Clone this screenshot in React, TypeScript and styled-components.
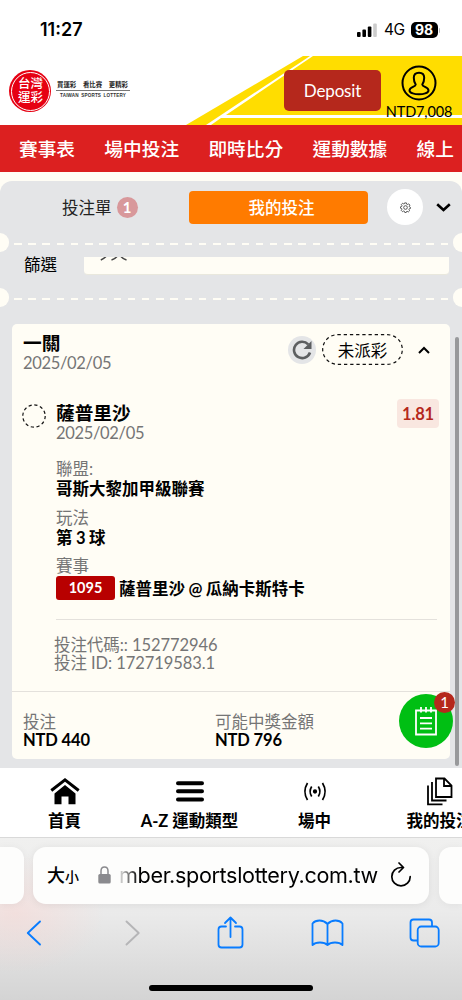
import React from "react";
import styled, { createGlobalStyle } from "styled-components";

const GlobalStyle = createGlobalStyle`
  * { box-sizing: border-box; }
  body { margin: 0; background: #fff; }
`;

const CREAM = "#fffdf5";
const PANEL = "#e4e5e7";

const Screen = styled.div`
  width: 462px;
  height: 1000px;
  overflow: hidden;
  display: flex;
  flex-direction: column;
  background: #fff;
  color: #000;
  font-family: Lato, "Noto Sans CJK TC", sans-serif;
  font-size: 16.5px;
`;

/* ---------- status bar ---------- */
const StatusBar = styled.div`
  height: 56px;
  flex: none;
  display: flex;
  align-items: center;
  justify-content: space-between;
  padding: 4px 22px 0 40px;
  font-family: Inter, sans-serif;
`;
const Clock = styled.span`
  font-size: 18px;
  font-weight: 600;
  margin-top: -1px;
`;
const StatusRight = styled.div`
  display: flex;
  align-items: center;
`;
const Network = styled.span`
  margin: 0 6px 0 7px;
  font-size: 15.5px;
  line-height: 16px;
  letter-spacing: -0.6px;
`;
const Battery = styled.span`
  width: 27px;
  height: 16px;
  border-radius: 5px;
  background: #000;
  color: #fff;
  font-size: 14px;
  font-weight: 700;
  line-height: 16px;
  text-align: center;
`;
const BatteryTip = styled.span`
  width: 1.5px;
  height: 5px;
  margin-left: 1px;
  border-radius: 0 2px 2px 0;
  background: #bbb;
`;

/* ---------- site header ---------- */
const Header = styled.header`
  position: relative;
  height: 69px;
  flex: none;
  display: flex;
  padding-left: 9px;
`;
const HeaderArt = styled.svg`
  position: absolute;
  right: 0;
  top: 0;
`;
const Seal = styled.div`
  width: 42px;
  height: 42px;
  margin-top: 14px;
  border-radius: 50%;
  background: #e60012;
  padding: 1.5px;
`;
const SealRing = styled.div`
  width: 39px;
  height: 39px;
  border: 0.8px solid #fff;
  border-radius: 50%;
  display: flex;
  flex-direction: column;
  align-items: center;
  justify-content: center;
  padding-left: 1px;
  color: #fff;
  font-size: 12.5px;
  font-weight: 500;
  line-height: 14px;
  white-space: nowrap;
`;
const Tagline = styled.div`
  width: 74px;
  margin: 25px 0 0 5px;
  text-align: center;
  white-space: nowrap;
`;
const TaglineZh = styled.div`
  display: flex;
  justify-content: space-between;
  padding: 0 2px 0 1px;
  height: 10px;
  border-bottom: 1px solid #777;
  font-size: 6.4px;
  line-height: 8px;
  font-weight: 700;
  color: #222;
`;
const TaglineEn = styled.div`
  margin-top: 2px;
  font-family: "Liberation Sans", sans-serif;
  font-weight: 700;
  font-size: 4.6px;
  line-height: 6px;
  word-spacing: 1px;
  letter-spacing: 0.16px;
  color: #333;
`;
const Deposit = styled.button`
  position: relative;
  width: 97px;
  height: 41px;
  margin: 14px 0 0 154px;
  border: 0;
  border-radius: 5px;
  background: #b5281c;
  color: #fff;
  font: 17px Lato, sans-serif;
  letter-spacing: -0.15px;
`;
const Account = styled.div`
  position: relative;
  width: 76px;
  padding-top: 9px;
  display: flex;
  flex-direction: column;
  align-items: center;
  font-size: 14.5px;
  letter-spacing: -0.15px;
  line-height: 18px;
`;
const Balance = styled.span`
  margin-top: 2px;
`;

const TopNav = styled.nav`
  height: 47px;
  flex: none;
  display: flex;
  gap: 29.3px;
  padding: 1px 0 0 19px;
  background: #dc2020;
  color: #fff;
  font-size: 18.7px;
  font-weight: 500;
  line-height: 46px;
  white-space: nowrap;
`;

/* ---------- bet panel ---------- */
const Stage = styled.main`
  position: relative;
  height: 596px;
  flex: none;
  padding-top: 9px;
  background: ${CREAM};
`;
const Panel = styled.section`
  height: 587px;
  border-radius: 12px 12px 0 0;
  background: ${PANEL};
  overflow: hidden;
`;
const Tabs = styled.div`
  height: 52px;
  display: flex;
  align-items: center;
`;
const SlipTab = styled.div`
  width: 189px;
  padding-left: 62px;
  display: flex;
  align-items: center;
  gap: 5px;
  color: #222;
`;
const SlipCount = styled.span`
  width: 21px;
  height: 21px;
  border-radius: 50%;
  background: #d8989b;
  color: #fff;
  font-size: 15px;
  font-weight: 700;
  line-height: 21px;
  text-align: center;
`;
const ActiveTab = styled.div`
  width: 179px;
  height: 33px;
  padding-left: 6px;
  border-radius: 4px;
  background: #ff7b00;
  color: #fff;
  font-weight: 500;
  line-height: 34px;
  text-align: center;
`;
const Settings = styled.div`
  width: 36px;
  height: 36px;
  margin: 0 13px 0 19px;
  border-radius: 50%;
  background: #fff;
  display: flex;
  align-items: center;
  justify-content: center;
`;
const Perforation = styled.div`
  height: 19px;
  display: flex;
  align-items: center;
  justify-content: space-between;
`;
const Notch = styled.span<{ $side: "left" | "right" }>`
  width: 9px;
  height: 19px;
  background: ${CREAM};
  border-radius: ${(p) => (p.$side === "left" ? "0 10px 10px 0" : "10px 0 0 10px")};
`;
const Dashes = styled.span`
  width: 435px;
  height: 2px;
  margin: 2px 4px 0 5px;
  flex: 1;
  background: repeating-linear-gradient(90deg, ${CREAM} 0 7.5px, transparent 7.5px 14.22px);
`;
const FilterRow = styled.div`
  height: 36px;
  display: flex;
  padding: 5px 13px 0 24px;
`;
const FilterLabel = styled.span`
  width: 60px;
  line-height: 16px;
  height: 18px;
`;
const FilterField = styled.div`
  flex: 1;
  height: 18px;
  border-radius: 0 0 4px 4px;
  background: ${CREAM};
  border-bottom: 1px solid #e9e8dd;
`;
const FieldRemnant = styled.svg`
  display: block;
`;

const Card = styled.article`
  height: 435px;
  margin: 17px 12px 0;
  border-radius: 5px;
  background: ${CREAM};
`;
const CardHead = styled.div`
  height: 74px;
  padding: 9px 12px 0 11px;
  display: flex;
`;
const Names = styled.div`
  flex: 1;
`;
const Title = styled.div`
  font-size: 18.7px;
  font-weight: 700;
  line-height: 20px;
`;
const DateText = styled.div`
  color: #757575;
  letter-spacing: -0.33px;
  line-height: 20px;
`;
const Refresh = styled.span`
  width: 28px;
  height: 28px;
  margin-right: 6px;
  border-radius: 50%;
  background: ${PANEL};
  display: flex;
  align-items: center;
  justify-content: center;
`;
const StatusTag = styled.span`
  position: relative;
  width: 81px;
  height: 31px;
  line-height: 34px;
  text-align: center;
`;
const Outline = styled.svg`
  position: absolute;
  inset: 0;
`;
const HeadActions = styled.div`
  display: flex;
  align-items: center;
  height: 33px;
`;
const Collapse = styled.svg`
  margin: 0 8px 0 15px;
`;
const Pick = styled.div`
  display: flex;
  padding: 5px 11px 0 10px;
  height: 61px;
`;
const PickMark = styled.svg`
  width: 24px;
  height: 24px;
  margin: 1px 10px 0 0;
`;
const Odds = styled.span`
  width: 42px;
  height: 29px;
  margin-top: -4px;
  border-radius: 4px;
  background: #f9e7e0;
  color: #b5281c;
  font-weight: 700;
  letter-spacing: -0.2px;
  line-height: 30px;
  text-align: center;
`;
const Details = styled.div`
  margin: 0 13px 0 44px;
  height: 161px;
  border-bottom: 1px solid #e4e1dc;
`;
const Label = styled.div`
  color: #757575;
  line-height: 20px;
`;
const Value = styled.div`
  display: flex;
  align-items: center;
  font-weight: 700;
  line-height: 20px;
  margin-bottom: 8.5px;
  word-spacing: -0.6px;
`;
const EventName = styled.span`
  padding-top: 2px;
`;
const Strong = styled.div`
  font-weight: 700;
  letter-spacing: -0.15px;
  line-height: 18px;
`;
const EventNo = styled.span`
  width: 59px;
  height: 24px;
  margin-right: 4px;
  border-radius: 3px;
  background: #b80000;
  color: #fff;
  font-size: 14.5px;
  line-height: 24px;
  text-align: center;
`;
const Codes = styled.div`
  height: 72px;
  padding: 16px 0 0 42px;
  color: #757575;
  letter-spacing: -0.07px;
  line-height: 18px;
  border-bottom: 1px solid #e4e1dc;
`;
const Totals = styled.div`
  display: grid;
  grid-template-columns: 192px 1fr;
  padding: 21px 0 0 11px;
`;
const TotalLabel = styled.div`
  color: #757575;
  line-height: 18px;
`;
const Scrollbar = styled.span`
  position: absolute;
  left: 455px;
  top: 165px;
  width: 4px;
  height: 429px;
  border-radius: 2px;
  background: #98999b;
`;
const Fab = styled.button`
  position: absolute;
  left: 399px;
  top: 522px;
  width: 54px;
  height: 54px;
  padding: 0;
  border: 0;
  border-radius: 50%;
  background: #00bf13;
  display: flex;
  align-items: center;
  justify-content: center;
`;
const FabCount = styled.span`
  position: absolute;
  right: -2px;
  top: -2px;
  width: 21px;
  height: 21px;
  border-radius: 50%;
  background: #b5281c;
  color: #fff;
  font: 15px/21px Lato, sans-serif;
  text-align: center;
`;

/* ---------- site bottom navigation ---------- */
const BottomNav = styled.nav`
  height: 70px;
  flex: none;
  display: flex;
  padding-left: 2px;
  border-bottom: 1px solid #d9d9d9;
  background: #fff;
  overflow: hidden;
`;
const NavItem = styled.div`
  width: 125px;
  flex: none;
  padding-top: 8px;
  display: flex;
  flex-direction: column;
  align-items: center;
  font-weight: 700;
  line-height: 22px;
  white-space: nowrap;
`;
const NavIcon = styled.svg`
  width: 30px;
  height: 30px;
  margin-bottom: 4px;
`;

/* ---------- browser chrome ---------- */
const Browser = styled.footer`
  height: 162px;
  flex: none;
  padding-top: 9px;
  background:
    radial-gradient(ellipse 90px 60px at 15px 75px, rgba(255, 205, 200, 0.38), transparent),
    linear-gradient(#f0f0ef 0, #ebebeb 45%, #d4d4d4 100%);
`;
const AddressRow = styled.div`
  display: flex;
  gap: 9.5px;
  height: 57px;
`;
const SideTab = styled.span<{ $side: "left" | "right" }>`
  flex: 1;
  background: #fdfdfc;
  border-radius: ${(p) => (p.$side === "left" ? "0 12px 12px 0" : "12px 0 0 12px")};
  box-shadow: 0 1px 8px rgba(0, 0, 0, 0.05);
`;
const Address = styled.div`
  width: 396px;
  border-radius: 13px;
  background: #fdfdfc;
  box-shadow: 0 1px 8px rgba(0, 0, 0, 0.07);
  display: flex;
  align-items: center;
  justify-content: space-between;
  padding: 0 17px 2px 14px;
`;
const AddressLead = styled.div`
  display: flex;
  align-items: center;
`;
const TextSize = styled.span`
  width: 51px;
  font-family: "Noto Sans CJK TC", sans-serif;
  font-weight: 500;
  font-size: 18px;
  line-height: 24px;
`;
const SmallGlyph = styled.span`
  font-size: 14px;
`;
const Url = styled.span`
  margin-left: 8px;
  font-family: Inter, sans-serif;
  font-size: 21.6px;
  line-height: 30px;
  letter-spacing: -0.35px;
  white-space: nowrap;
  background: linear-gradient(90deg, rgba(0, 0, 0, 0.1), #000 20px);
  background-clip: text;
  color: transparent;
`;
const Toolbar = styled.div`
  height: 58px;
  display: flex;
  align-items: center;
  justify-content: space-between;
  padding: 0 20px 0 17px;
`;
const ToolIcon = styled.svg`
  width: 34px;
  height: 34px;
`;
const HomeIndicator = styled.div`
  width: 164px;
  height: 6px;
  margin: 23px auto 0;
  border-radius: 3px;
  background: #000;
`;

const BLUE = "#087cff";

function PerforatedLine() {
  return (
    <Perforation>
      <Notch $side="left" />
      <Dashes />
      <Notch $side="right" />
    </Perforation>
  );
}

export default function App() {
  return (
    <Screen>
      <GlobalStyle />
      <StatusBar>
        <Clock>11:27</Clock>
        <StatusRight>
          <svg width="20" height="14" viewBox="0 0 20 14">
            <rect x="0" y="9" width="3.6" height="5" rx="1" />
            <rect x="5.4" y="6.5" width="3.6" height="7.5" rx="1" />
            <rect x="10.8" y="3.5" width="3.6" height="10.5" rx="1" />
            <rect x="16.2" y="0.5" width="3.6" height="13.5" rx="1" fill="#ccc" />
          </svg>
          <Network>4G</Network>
          <Battery>98</Battery>
          <BatteryTip />
        </StatusRight>
      </StatusBar>

      <Header>
        <HeaderArt width="276" height="69" viewBox="186 56 276 69">
          <path d="M303 56H310L206 125H186Z" fill="#ffdd00" />
          <path d="M313 56H462V115H226Z" fill="#ffdd00" />
          <path d="M221 118H462V125H211Z" fill="#ffdd00" />
        </HeaderArt>
        <Seal>
          <SealRing>
            <span>台灣</span>
            <span>運彩</span>
          </SealRing>
        </Seal>
        <Tagline>
          <TaglineZh>
            <span>買運彩</span>
            <span>看比賽</span>
            <span>更精彩</span>
          </TaglineZh>
          <TaglineEn>TAIWAN SPORTS LOTTERY</TaglineEn>
        </Tagline>
        <Deposit>Deposit</Deposit>
        <Account>
          <svg width="36" height="36" viewBox="0 0 36 36" fill="none" stroke="#000" strokeWidth="2">
            <circle cx="18" cy="18" r="16.500" />
            <path d="M14.700 19.500C13.400 17.500 12.800 15 12.800 12.700C12.800 9.500 15 7.700 18 7.700S23.200 9.500 23.200 12.700C23.200 15 22.600 17.500 21.300 19.500C21.300 22 27.500 22 27.500 25.500C27.500 28.200 22 29.300 18 29.300S8.500 28.200 8.500 25.500C8.500 22 14.700 22 14.700 19.500Z" />
          </svg>
          <Balance>NTD7,008</Balance>
        </Account>
      </Header>

      <TopNav>
        <span>賽事表</span>
        <span>場中投注</span>
        <span>即時比分</span>
        <span>運動數據</span>
        <span>線上</span>
      </TopNav>

      <Stage>
        <Panel>
          <Tabs>
            <SlipTab>
              投注單<SlipCount>1</SlipCount>
            </SlipTab>
            <ActiveTab>我的投注</ActiveTab>
            <Settings>
              <svg width="11" height="11" viewBox="0 0 24 24" fill="none" stroke="#444" strokeWidth="1.900">
                <circle cx="12" cy="12" r="4" />
                <path d="M10 2h4l.7 2.800 1.700.7 2.500-1.500 2.800 2.800-1.500 2.500.7 1.700L23 12v2l-2.800.8-.7 1.700 1.400 2.500-2.800 2.800-2.500-1.500-1.700.7L13.500 23h-3l-.8-2.700-1.700-.7-2.500 1.500-2.800-2.800 1.500-2.500-.7-1.700L1 13.500v-3l2.700-.8.7-1.700-1.500-2.500 2.800-2.800 2.500 1.500 1.700-.7Z" />
              </svg>
            </Settings>
            <svg width="15" height="10" viewBox="0 0 15 10" fill="none" stroke="#000" strokeWidth="2.600">
              <path d="M1.200 2.200L7.500 8L13.800 2.200" />
            </svg>
          </Tabs>
          <PerforatedLine />
          <FilterRow>
            <FilterLabel>篩選</FilterLabel>
            <FilterField>
              <FieldRemnant width="46" height="5" viewBox="0 0 46 5" fill="none" stroke="#444" strokeWidth="1.500">
                <path d="M22 -0.500Q19.500 2 16.800 3M33 -0.500Q31 2 27.500 3M37 -0.500Q39 2 42.500 3" />
              </FieldRemnant>
            </FilterField>
          </FilterRow>
          <PerforatedLine />

          <Card>
            <CardHead>
              <Names>
                <Title>一關</Title>
                <DateText>2025/02/05</DateText>
              </Names>
              <HeadActions>
                <Refresh>
                  <svg width="20" height="20" viewBox="0 0 20 20">
                    <path d="M16.200 4.300A8.200 8.200 0 1 0 18 12.500" fill="none" stroke="#5c5e60" strokeWidth="2.600" />
                    <path d="M19.500 1V9H11.500Z" fill="#5c5e60" />
                  </svg>
                </Refresh>
                <StatusTag>
                  <Outline width="81" height="31" viewBox="0 0 81 31">
                    <rect x="0.700" y="0.700" width="79.600" height="29.600" rx="14.800" fill="none" stroke="#111" strokeWidth="1.200" strokeDasharray="3.300 2.900" />
                  </Outline>
                  未派彩
                </StatusTag>
                <Collapse width="12" height="8" viewBox="0 0 12 8" fill="none" stroke="#000" strokeWidth="2">
                  <path d="M1 7L6 2L11 7" />
                </Collapse>
              </HeadActions>
            </CardHead>
            <Pick>
              <PickMark viewBox="0 0 24 24">
                <circle cx="12" cy="12" r="11.200" fill="none" stroke="#111" strokeWidth="1.200" strokeDasharray="3.200 2.660" />
              </PickMark>
              <Names>
                <Title>薩普里沙</Title>
                <DateText>2025/02/05</DateText>
              </Names>
              <Odds>1.81</Odds>
            </Pick>
            <Details>
              <Label>聯盟:</Label>
              <Value>哥斯大黎加甲級聯賽</Value>
              <Label>玩法</Label>
              <Value>第 3 球</Value>
              <Label>賽事</Label>
              <Value>
                <EventNo>1095</EventNo>
                <EventName>薩普里沙 @ 瓜納卡斯特卡</EventName>
              </Value>
            </Details>
            <Codes>
              <div>投注代碼:: 152772946</div>
              <div>投注 ID: 172719583.1</div>
            </Codes>
            <Totals>
              <div>
                <TotalLabel>投注</TotalLabel>
                <Strong>NTD 440</Strong>
              </div>
              <div>
                <TotalLabel>可能中獎金額</TotalLabel>
                <Strong>NTD 796</Strong>
              </div>
            </Totals>
          </Card>
        </Panel>
        <Scrollbar />
        <Fab>
          <svg width="22" height="30" viewBox="0 0 22 30" fill="none" stroke="#fff" strokeWidth="1.800">
            <path d="M3 4.500H1V28.500H21V4.500H19M6 1V6.500M11 1V6.500M16 1V6.500M3 4.500H19M5 12H17M5 17.300H17M5 22.600H17" />
          </svg>
          <FabCount>1</FabCount>
        </Fab>
      </Stage>

      <BottomNav>
        <NavItem>
          <NavIcon viewBox="0 0 30 30">
            <path d="M1.300 14.500L15 3.800L28.700 14.500" fill="none" stroke="#000" strokeWidth="3" />
            <path d="M4.500 17.500L15 9L25.500 17.500V28.300H18.500V20.500H11.500V28.300H4.500Z" />
          </NavIcon>
          首頁
        </NavItem>
        <NavItem>
          <NavIcon viewBox="0 0 30 30">
            <path d="M3 7.300H27M3 15.300H27M3 23.500H27" stroke="#000" strokeWidth="4" strokeLinecap="round" />
          </NavIcon>
          A-Z 運動類型
        </NavItem>
        <NavItem>
          <NavIcon viewBox="0 0 30 30" fill="none" stroke="#000" strokeWidth="1.700">
            <circle cx="15" cy="15.500" r="1.300" fill="#000" />
            <path d="M11.700 10.500Q8.500 15.500 11.700 20.500M18.300 10.500Q21.500 15.500 18.300 20.500M7.500 7Q2.300 15.500 7.500 24M22.500 7Q27.700 15.500 22.500 24" />
          </NavIcon>
          場中
        </NavItem>
        <NavItem>
          <NavIcon viewBox="0 0 30 30" fill="none" stroke="#000" strokeWidth="1.800">
            <path d="M11 2.500H19.500L26.500 9.500V21H11ZM19 2.500V10H26.500M7 6V24.500H21.500M3 9.500V28.300H17.500" />
          </NavIcon>
          我的投注
        </NavItem>
      </BottomNav>

      <Browser>
        <AddressRow>
          <SideTab $side="left" />
          <Address>
            <AddressLead>
              <TextSize>
                大<SmallGlyph>小</SmallGlyph>
              </TextSize>
              <svg width="13" height="18" viewBox="0 0 13 18">
                <path d="M3 9V5Q3 1 6.500 1T10 5V9" fill="none" stroke="#8a8a8e" strokeWidth="1.500" />
                <rect x="0.300" y="8" width="12.400" height="9.500" rx="1.500" fill="#8a8a8e" />
              </svg>
              <Url>mber.sportslottery.com.tw</Url>
            </AddressLead>
            <svg width="22" height="26" viewBox="0 0 22 26" fill="none" stroke="#000" strokeWidth="1.700" strokeLinecap="round" strokeLinejoin="round">
              <path d="M12.500 5.500H11A9.200 9.200 0 1 0 20.200 14.700M9 1L13.500 5.500L9 10" />
            </svg>
          </Address>
          <SideTab $side="right" />
        </AddressRow>
        <Toolbar>
          <ToolIcon viewBox="0 0 34 34" fill="none" stroke={BLUE} strokeWidth="1.900" strokeLinecap="round" strokeLinejoin="round">
            <path d="M23 5.500L10.800 17L23 28.500" />
          </ToolIcon>
          <ToolIcon viewBox="-2 0 34 34" fill="none" stroke="#b5b5b7" strokeWidth="1.900" strokeLinecap="round" strokeLinejoin="round">
            <path d="M9.500 5.500L21.700 17L9.500 28.500" />
          </ToolIcon>
          <ToolIcon viewBox="0 0 34 34" fill="none" stroke={BLUE} strokeWidth="1.800" strokeLinecap="round" strokeLinejoin="round">
            <path d="M13 10.500H8.500Q5.500 10.500 5.500 13.500V28.500Q5.500 31.500 8.500 31.500H26.500Q29.500 31.500 29.500 28.500V13.500Q29.500 10.500 26.500 10.500H22M17.500 21V1.500M12 7L17.500 1.500L23 7" />
          </ToolIcon>
          <ToolIcon viewBox="0 0 34 34" fill="none" stroke={BLUE} strokeWidth="1.800" strokeLinecap="round" strokeLinejoin="round">
            <path d="M17.500 8Q14 4.500 9.500 4.500T2.500 7.500V29Q5 26.500 10 26.500T17.500 29Q20 26.500 25 26.500T32.500 29V7.500Q30 4.500 25.500 4.500T17.500 8ZM17.500 8V29" />
          </ToolIcon>
          <ToolIcon viewBox="0 0 34 34" fill="none" stroke={BLUE} strokeWidth="1.800" strokeLinejoin="round">
            <rect x="9.700" y="10.500" width="21" height="20" rx="3.500" />
            <path d="M9.700 24.500H5.500Q2.500 24.500 2.500 21.500V6.500Q2.500 3.500 5.500 3.500H21Q24 3.500 24 6.500V10.500" />
          </ToolIcon>
        </Toolbar>
        <HomeIndicator />
      </Browser>
    </Screen>
  );
}
